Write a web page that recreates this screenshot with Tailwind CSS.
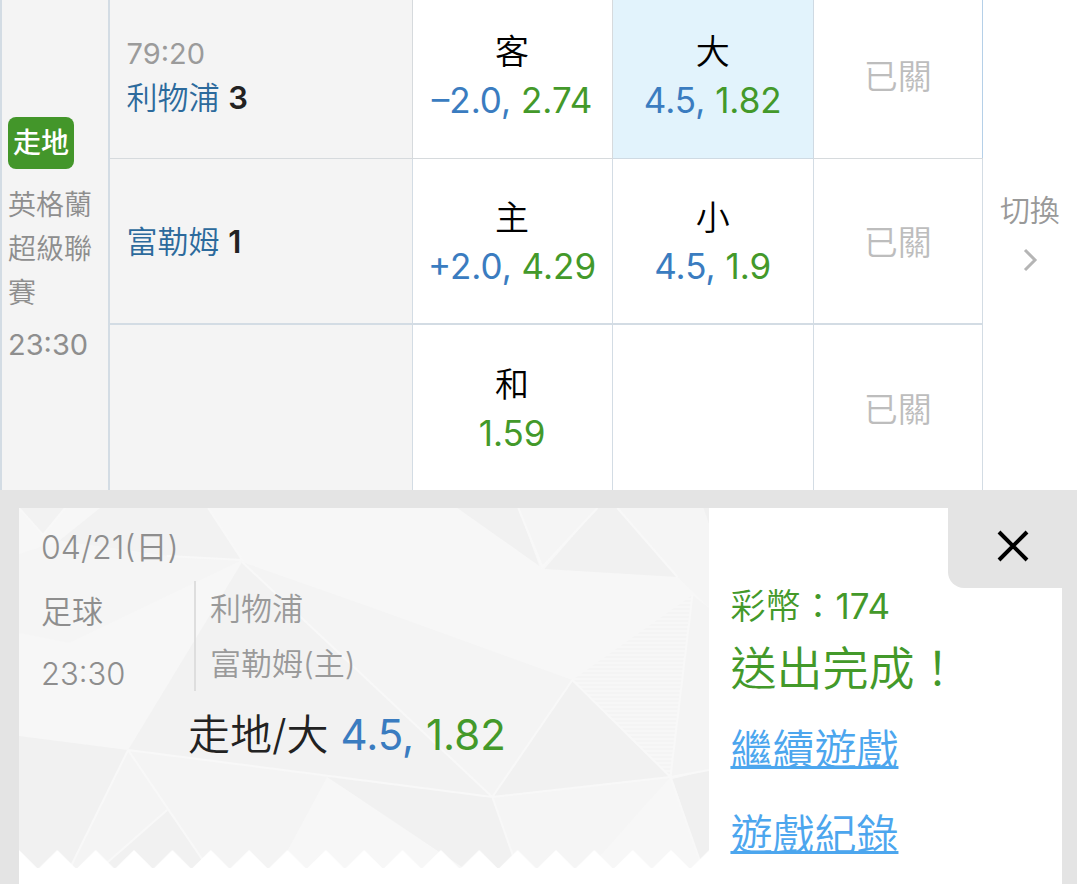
<!DOCTYPE html>
<html lang="zh-Hant">
<head>
    <meta charset="UTF-8">
    <meta name="viewport" content="width=device-width, initial-scale=1.0">
    <title>走地投注</title>
    <script src="https://cdn.jsdelivr.net/npm/@tailwindcss/browser@4"></script>
</head>
<body class="bg-white font-['Inter','Noto_Sans_CJK_TC',sans-serif] font-[350]">
<div class="flex flex-col min-h-screen mr-[3px]">

    <!-- Odds table -->
    <table class="w-full table-fixed border-collapse border-l-2 border-[#d3dce4] text-center">
        <colgroup>
            <col class="w-[10%]">
            <col class="w-[28.2%]">
            <col class="w-[18.6%]">
            <col class="w-[18.7%]">
            <col class="w-[15.7%]">
            <col class="w-[8.8%]">
        </colgroup>
        <tbody>
            <tr class="h-[158px]">
                <td rowspan="3" class="border-r-2 border-[#d3dce4] bg-[#f4f4f4] pl-[6px] pb-[6px] text-left text-[28px] leading-[44px] text-[#8e8e8e]">
                    <span class="inline-block rounded-lg bg-[#43962a] px-[5px] py-1 font-medium text-white">走地</span>
                    <p class="mt-[14px] w-[90px]">英格蘭超級聯賽</p>
                    <p class="mt-2 text-[29px] font-normal">23:30</p>
                </td>
                <td class="border-r border-b border-[#d6dadd] bg-[#f4f4f4] pl-[17px] pb-[6px] text-left text-[31px] leading-[44px]">
                    <p class="text-[29px] font-normal text-[#9b9b9b]">79:20</p>
                    <p class="text-[#2c6a9c]">利物浦 <b class="font-semibold text-[#222]">3</b></p>
                </td>
                <td class="border-r border-b border-[#d6dadd] pb-[6px]">
                    <button class="w-full text-[35px] leading-[49px]">
                        <span class="block text-[34px]">客</span>
                        <span class="font-normal text-[#3a7cc0]">–2.0,</span> <span class="font-normal text-[#43992a]">2.74</span>
                    </button>
                </td>
                <td class="border-r border-b border-[#cfdae3] bg-[#e2f3fc] pb-[6px]">
                    <button class="w-full text-[35px] leading-[49px]">
                        <span class="block text-[34px]">大</span>
                        <span class="font-normal text-[#3a7cc0]">4.5,</span> <span class="font-normal text-[#43992a]">1.82</span>
                    </button>
                </td>
                <td class="border-b border-r border-b-[#d6dadd] border-r-[#b5d0e8] pb-1 text-[34px] text-[#bdbdbd]">已關</td>
                <td rowspan="3" class="text-[30px] leading-[44px] text-[#999]">
                    <button class="w-full pb-[30px]">
                        切換
                        <svg class="mx-auto mt-4 h-6 w-4" viewBox="0 0 16 24" fill="none" stroke="#b5b5b5" stroke-width="3"><path d="M3 2l10 10L3 22"/></svg>
                    </button>
                </td>
            </tr>
            <tr class="h-[166px]">
                <td class="border-r border-b-2 border-[#d3dce4] bg-[#f4f4f4] pl-[17px] pt-[2px] text-left text-[31px] leading-[44px] text-[#2c6a9c]">富勒姆 <b class="font-semibold text-[#222]">1</b></td>
                <td class="border-r border-b-2 border-[#d3dce4]">
                    <button class="w-full pt-[2px] text-[35px] leading-[49px]">
                        <span class="block text-[34px]">主</span>
                        <span class="font-normal text-[#3a7cc0]">+2.0,</span> <span class="font-normal text-[#43992a]">4.29</span>
                    </button>
                </td>
                <td class="border-r border-b-2 border-[#d3dce4]">
                    <button class="w-full pt-[2px] text-[35px] leading-[49px]">
                        <span class="block text-[34px]">小</span>
                        <span class="font-normal text-[#3a7cc0]">4.5,</span> <span class="font-normal text-[#43992a]">1.9</span>
                    </button>
                </td>
                <td class="border-r border-b-2 border-[#d3dce4] pt-1 text-[34px] text-[#bdbdbd]">已關</td>
            </tr>
            <tr class="h-[166px]">
                <td class="border-r border-[#d3dce4] bg-[#f4f4f4]"></td>
                <td class="border-r border-[#d3dce4]">
                    <button class="w-full pt-[2px] text-[35px] leading-[49px]">
                        <span class="block text-[34px]">和</span>
                        <span class="font-normal text-[#43992a]">1.59</span>
                    </button>
                </td>
                <td class="border-r border-[#d3dce4]"></td>
                <td class="border-r border-[#d3dce4] pt-1 text-[34px] text-[#bdbdbd]">已關</td>
            </tr>
        </tbody>
    </table>

    <!-- Bet slip -->
    <section class="relative flex grow bg-[#e4e4e4] pt-[18px] pr-[15px] pl-[19px]">
        <div class="flex grow bg-white">

            <!-- Ticket -->
            <div class="relative h-[360px] w-[66.2%] text-[31px] text-[#8e8e8e]">
                <svg class="absolute inset-0 h-full w-full" viewBox="0 0 690 360" preserveAspectRatio="none">
                    <defs>
                        <pattern id="teeth" width="38.33" height="18" y="342" patternUnits="userSpaceOnUse">
                            <path d="M0 0L18 18H0ZM38.33 0L20 18H38.33Z" fill="#fff"/>
                        </pattern>
                        <pattern id="lines" width="8" height="4" patternUnits="userSpaceOnUse">
                            <path d="M0 1H8" stroke="#f1f1f1"/>
                        </pattern>
                    </defs>
                    <rect width="690" height="360" fill="#f7f7f7"/>
                    <path d="M0 0H46L24 27ZM81 0H189L223 52 148 48 40 33Z" fill="#f2f2f2"/>
                    <path d="M0 46L40 33 148 48 223 52 50 135 0 125Z" fill="#f5f5f5"/>
                    <path d="M223 54L473 289 308 269 109 242Z" fill="#f2f2f2"/>
                    <path d="M223 54L351 99 553 172 473 289Z" fill="#f4f4f4"/>
                    <path d="M0 228L109 242 51 360H0Z" fill="#f1f1f1"/>
                    <path d="M109 242L308 269 259 360H51Z" fill="#f4f4f4"/>
                    <path d="M148 302L189 360H82Z" fill="#f1f1f1"/>
                    <path d="M308 269L473 289 498 360H444Z" fill="#f1f1f1"/>
                    <path d="M553 172L651 269 473 289Z" fill="#f1f1f1"/>
                    <path d="M473 289L651 269 570 360H498Z" fill="#f5f5f5"/>
                    <path d="M438 0H499L520 58ZM598 0L658 69 525 61 578 0Z" fill="#f1f1f1"/>
                    <path d="M499 0H578L523 59ZM598 0H690V100L658 69Z" fill="#f5f5f5"/>
                    <path d="M673 87L553 172 651 269Z" fill="url(#lines)"/>
                    <path d="M673 87L690 100V262L651 269Z" fill="#f4f4f4"/>
                    <path d="M653 271L690 262V360H683ZM684 0H690V17Z" fill="#f0f0f0"/>
                    <path d="M109 242L473 289 651 269 690 262M223 54L473 289 498 360M553 172L473 289M553 172L651 269 673 87M109 242L51 360M109 242L189 360M148 302L82 360M189 0L223 52 148 48M651 269L683 360M499 0L523 59 578 0M598 0L658 69M0 0L24 27 46 0" fill="none" stroke="#f8f8f8" stroke-width="2"/>
                    <rect y="342" width="690" height="18" fill="url(#teeth)"/>
                </svg>
                <div class="relative pt-[18px] pl-[22px]">
                    <p class="text-[32px] leading-[44px]">04/21(日)</p>
                    <div class="mt-[11px] grid grid-cols-[153px_1fr]">
                        <div class="leading-[62px]">
                            <p>足球</p>
                            <p>23:30</p>
                        </div>
                        <div class="mb-[14px] border-l-2 border-[#dedede] pl-[14px] leading-[55px] text-[#9a9a9a]">
                            <p>利物浦</p>
                            <p>富勒姆(主)</p>
                        </div>
                    </div>
                    <p class="pl-[147px] text-[42px] leading-[60px] text-[#222]">走地/大 <span class="font-normal text-[#3a7cc0]">4.5,</span> <span class="font-normal text-[#43992a]">1.82</span></p>
                </div>
            </div>

            <!-- Result -->
            <div class="grow pt-[73px] pl-[21px] text-[#43992a]">
                <p class="text-[35px] leading-[50px]">彩幣：<span class="font-normal">174</span></p>
                <p class="text-[46px] leading-[74px]">送出完成！</p>
                <nav class="mt-[2px] flex flex-col items-start text-[42px] leading-[85px] text-[#4ca6ee]">
                    <a href="#" class="underline decoration-[3px] underline-offset-1">繼續遊戲</a>
                    <a href="#" class="underline decoration-[3px] underline-offset-1">遊戲紀錄</a>
                </nav>
            </div>
        </div>

        <button aria-label="關閉" class="absolute top-[18px] right-0 flex h-20 w-[129px] items-center justify-center rounded-bl-2xl bg-[#e4e4e4] pb-1">
            <svg class="h-8 w-8" viewBox="0 0 32 32" stroke="#000" stroke-width="4"><path d="M2 2l28 28M30 2L2 30"/></svg>
        </button>
    </section>
</div>
</body>
</html>
